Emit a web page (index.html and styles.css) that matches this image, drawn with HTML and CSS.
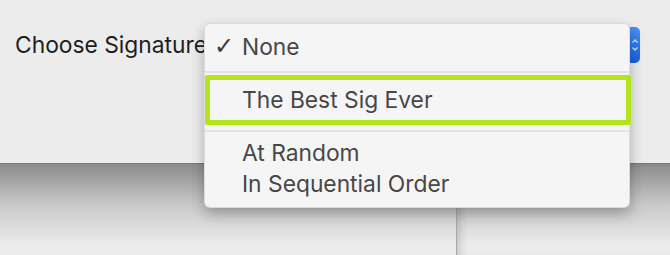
FILE: index.html
```html
<!DOCTYPE html>
<html lang="en">

<head>
    <meta charset="UTF-8">
    <title>Choose Signature</title>
    <link rel="stylesheet" href="styles.css">
</head>

<body>

    <div class="top-pane">
        <div class="sig-row">
            <span class="sig-label">Choose Signature</span>
            <div class="popup">
                <div class="popup-arrows">
                    <svg width="8" height="20" viewBox="0 0 8 20">
                        <path d="M1.5 7.5 L4 5 L6.5 7.5" fill="none" stroke="#cfe0fb" stroke-width="1.4" />
                        <path d="M1.5 12.5 L4 15 L6.5 12.5" fill="none" stroke="#cfe0fb" stroke-width="1.4" />
                    </svg>
                </div>

                <!-- open menu of the popup -->
                <div class="menu">
                    <div class="menu-item"><span class="check">✓</span>None</div>
                    <div class="menu-sep"></div>
                    <div class="menu-item">The Best Sig Ever</div>
                    <div class="menu-sep menu-sep-low"></div>
                    <div class="menu-item">At Random</div>
                    <div class="menu-item">In Sequential Order</div>
                    <div class="highlight"></div>
                </div>
            </div>
        </div>
    </div>

    <div class="bottom-panes">
        <div class="pane pane-left"></div>
        <div class="pane pane-right"></div>
    </div>

</body>

</html>
```

FILE: styles.css
```css
body {
    margin: 0;
    width: 670px;
    height: 255px;
    overflow: hidden;
    background-color: #ececec;
    font-family: "Inter", "Liberation Sans", sans-serif;
}

.top-pane {
    height: 164px;
    background-color: #ececec;
    border-bottom: 1px solid #7a7a7a;
    box-sizing: border-box;
}

.sig-row {
    display: flex;
    align-items: flex-start;
    padding: 31px 0 0 15px;
}

.sig-label {
    font-size: 22.8px;
    color: #1e1e1e;
    line-height: 28px;
    width: 189px;
    white-space: nowrap;
}

.popup {
    position: relative;
    width: 436px;
    height: 36px;
    margin-top: -4px;
    display: flex;
    justify-content: flex-end;
}

.popup-arrows {
    width: 14px;
    height: 36px;
    border-radius: 5px;
    background: linear-gradient(#4690f7, #1762dc);
    display: flex;
    align-items: center;
    justify-content: flex-end;
    padding-right: 1px;
    box-sizing: border-box;
}

.menu {
    position: absolute;
    left: 0;
    top: -4px;
    width: 426px;
    height: 185px;
    box-sizing: border-box;
    padding-top: 7px;
    background-color: #f5f5f5;
    border-radius: 6px;
    border: 1px solid rgba(0, 0, 0, 0.1);
    box-shadow: 0 6px 14px rgba(0, 0, 0, 0.28);
}

.menu-item {
    height: 31px;
    line-height: 31px;
    padding-left: 37px;
    font-size: 22.8px;
    color: #474747;
    position: relative;
    white-space: nowrap;
}

.check {
    position: absolute;
    left: 9px;
    font-family: "DejaVu Sans", sans-serif;
    font-size: 24px;
    color: #3a3a3a;
}

.menu-sep {
    height: 22px;
    box-sizing: border-box;
    padding-top: 9px;
}

.menu-sep-low {
    padding-top: 15px;
}

.menu-sep::after {
    content: "";
    display: block;
    height: 2px;
    background-color: #e2e2e2;
}

.highlight {
    position: absolute;
    left: 0;
    top: 51px;
    width: 426px;
    height: 50px;
    box-sizing: border-box;
    border: 5px solid #b5e41e;
    border-radius: 2px;
}

.bottom-panes {
    display: flex;
    height: 91px;
}

.pane {
    background: linear-gradient(#8b8b8b, #c9c9c9 45%, #ececec 90%);
}

.pane-left {
    width: 456px;
    border-right: 1px solid #a9a9a9;
}

.pane-right {
    flex: 1;
    box-shadow: inset 8px 0 10px -6px rgba(0, 0, 0, 0.2);
}
```
